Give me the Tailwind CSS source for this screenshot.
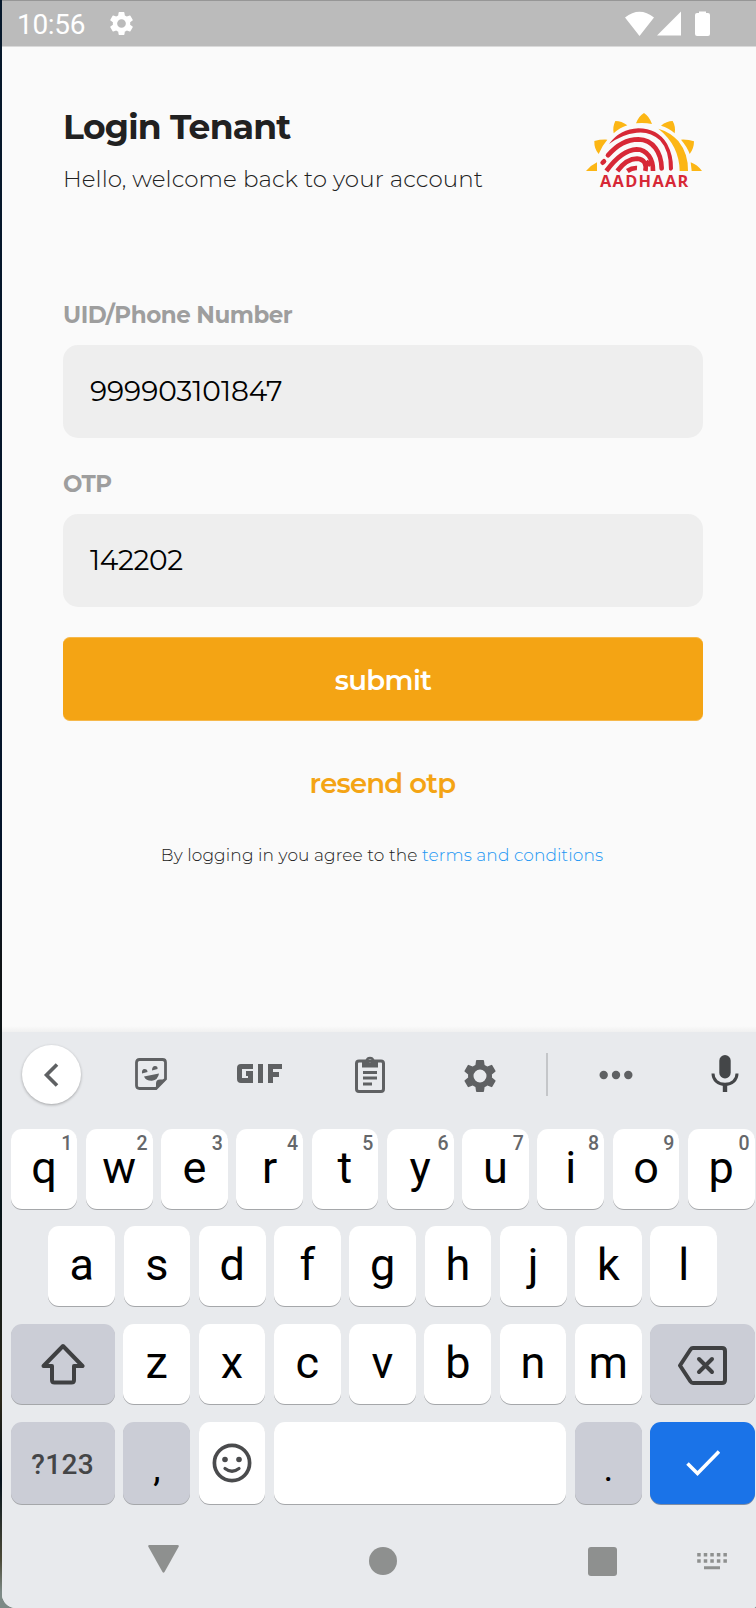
<!DOCTYPE html>
<html lang="en">
<head>
<meta charset="utf-8">
<title>Login Tenant</title>
<script src="https://cdn.jsdelivr.net/npm/@tailwindcss/browser@4"></script>
</head>
<body class="w-[756px] h-[1608px] overflow-hidden bg-[linear-gradient(#06182b_0%,#04142a_54%,#101416_60%,#061418_75%,#2a2618_87%,#05121c_92%,#4b4a38_97%,#7d8a86_99%)] pl-[2px] font-[Montserrat,Inter,sans-serif]">
<div class="w-[754px] h-[1608px] flex flex-col bg-[#fafafa] rounded-bl-[14px] rounded-br-[3px] overflow-hidden">

  <!-- Status bar -->
  <header class="h-[47px] shrink-0 bg-[#bbbbbb] border-t border-t-[#969696] border-b border-b-[#dadada] flex items-center pl-[15px] text-white">
    <span class="font-[Roboto,sans-serif] text-[28px] leading-[44px] pt-[2px] w-[71px] tracking-[-0.3px]">10:56</span>
    <svg class="ml-[19px] w-[29px] h-[29px]" viewBox="0 0 24 24" fill="currentColor"><path d="M19.14 12.94c.04-.3.06-.61.06-.94s-.02-.64-.07-.94l2.03-1.58a.49.49 0 0 0 .12-.61l-1.92-3.32a.49.49 0 0 0-.59-.22l-2.39.96a7 7 0 0 0-1.62-.94l-.36-2.54a.48.48 0 0 0-.48-.41h-3.84a.47.47 0 0 0-.47.41l-.36 2.54c-.59.24-1.13.57-1.62.94l-2.39-.96a.48.48 0 0 0-.59.22L2.74 8.87a.47.47 0 0 0 .12.61l2.03 1.58a6.6 6.6 0 0 0 0 1.88l-2.03 1.58a.49.49 0 0 0-.12.61l1.92 3.32c.12.22.37.29.59.22l2.39-.96c.5.38 1.03.7 1.62.94l.36 2.54c.05.24.24.41.48.41h3.84c.24 0 .44-.17.47-.41l.36-2.54a6.7 6.7 0 0 0 1.62-.94l2.39.96c.22.08.47 0 .59-.22l1.92-3.32a.47.47 0 0 0-.12-.61zM12 15.6a3.6 3.6 0 1 1 0-7.2 3.6 3.6 0 0 1 0 7.2"/></svg>
    <svg class="ml-auto mr-[45px] w-[86px] h-[26px]" viewBox="0 0 86 26" fill="currentColor"><path d="M0 6.5Q14.5 -5 29 6.5L14.5 25ZM32 24.5 56 .5V24.5ZM74 2V.5h7V2h2q2 0 2 2V23q0 2-2 2H72q-2 0-2-2V4q0-2 2-2Z"/></svg>
  </header>

  <!-- Login form -->
  <main class="grow pl-[61px] pr-[53px] pt-[60px] flex flex-col">
    <div class="flex justify-between h-[88px]">
      <div>
        <h1 class="h-[40px] leading-[40px] text-[34.5px] font-bold text-[#212121] whitespace-nowrap tracking-[-0.75px]">Login Tenant</h1>
        <p class="mt-4 h-[32px] leading-[32px] text-[23px] font-light text-[#212121] whitespace-nowrap tracking-[0.06px]">Hello, welcome back to your account</p>
      </div>
      <svg class="mt-[5px] w-[118px] h-[77px] overflow-visible" viewBox="45 335 354 231">
        <g fill="#fcb614">
          <path d="M198 369Q207 346 222 338Q238 348 246 371Q222 366 198 369Z"/>
          <path d="M136 362Q155 362 172 375Q148 383 131 399Q127 380 136 362Z"/>
          <path d="M308 362Q318 380 314 399Q296 382 273 376Q290 362 308 362Z"/>
          <path d="M73 422Q92 417 112 418Q96 436 86 461Q72 445 73 422Z"/>
          <path d="M372 423Q372 445 359 461Q352 440 333 418Q355 417 372 423Z"/>
          <path d="M48 512Q62 495 81 486V512ZM396 512Q382 493 362 486L365 512Z"/>
          <path d="M265 385Q300 395 325 422Q355 460 354 512H329Q328 435 265 385Z"/>
        </g>
        <path fill="#d72836" d="M117 431Q150 386 205 384Q262 384 291 430Q310 465 309 505Q304 515 297 508Q298 450 270 420Q240 392 200 397Q155 402 117 431Z"/>
        <g fill="none" stroke="#d72836" stroke-width="14">
          <path stroke-linecap="round" d="M114 465Q155 417 205 417C250 418 274 457 275 504M98 487L102 483"/>
          <path d="M109 512Q155 449 200 447C232 447 250 478 249 512M142 512Q170 475 201 475C224 477 230 492 226 512M228 484 242 494M172 512Q186 502 201 503"/>
        </g>
        <text x="90" y="561" font-family="Open Sans, sans-serif" font-weight="700" font-size="49" fill="#d72836" textLength="265" lengthAdjust="spacing">AADHAAR</text>
      </svg>
    </div>

    <label class="mt-[103px] h-[32px] leading-[34px] text-[23px] font-bold text-[#9e9e9e] whitespace-nowrap tracking-[-0.48px]">UID/Phone Number</label>
    <div class="mt-[15px] h-[93px] rounded-[15px] bg-[#eeeeee] pl-[27px] pb-[2px] flex items-center text-[28px] text-black">999903101847</div>
    <label class="mt-[29px] h-[32px] leading-[34px] text-[23px] font-bold text-[#9e9e9e] whitespace-nowrap tracking-[-0.6px]">OTP</label>
    <div class="mt-[15px] h-[93px] rounded-[15px] bg-[#eeeeee] pl-[27px] pb-[2px] flex items-center text-[28px] text-black tracking-[-0.3px]">142202</div>

    <button class="mt-[30px] h-[84px] rounded-[7px] bg-[#f4a414] border-y border-[#f6b84b] pt-[3px] text-[27.5px] font-semibold text-white tracking-[-0.6px]">submit</button>
    <button class="mt-[46px] h-[32px] leading-[32px] pr-px text-[27.5px] font-semibold text-[#f4a414] tracking-[-0.75px]">resend otp</button>
    <p class="mt-[44px] h-[24px] leading-[24px] pr-[2px] text-[17px] text-center font-light text-[#212121] whitespace-nowrap tracking-[0.1px]">By logging in you agree to the <a class="text-[#2196f3]">terms and conditions</a></p>
  </main>

  <div class="h-[6px] shrink-0 bg-gradient-to-b from-[#fafafa] to-[#f0f0f0]"></div>

  <!-- On-screen keyboard -->
  <section class="h-[576px] shrink-0 bg-[#e8eaed] font-[Roboto,sans-serif] text-black flex flex-col">
    <div class="h-[97px] shrink-0 pb-[12px] pl-[20px] flex items-center text-[#5f6163]">
      <div class="size-[59px] rounded-full bg-white shadow-[0_1px_3px_rgba(0,0,0,0.3)] flex items-center justify-center pr-[2px]">
        <svg class="w-[16px] h-[24px]" viewBox="0 0 16 24" fill="none" stroke="currentColor" stroke-width="3.6"><path d="M14 1.5 3.5 12 14 22.5"/></svg>
      </div>
      <svg class="ml-[54px] -mt-[2px] w-[32px] h-[32px]" viewBox="0 0 32 32" fill="none" stroke="currentColor" stroke-width="2.8"><path d="M4.5 1.5H27.5Q30.5 1.5 30.5 4.5V21L21 30.5H4.5Q1.5 30.5 1.5 27.5V4.5Q1.5 1.5 4.5 1.5Z"/><path stroke="none" fill="currentColor" d="M21 31V25.5Q21 21.5 25 21.5H31L21 31ZM7 15.5Q6.500 11 9.500 11T12.500 14ZM17 12.500Q17 8 20 8T22.500 11ZM9 18.500 24 15.500Q23 22 17 22.800 11 23 9 18.500Z"/></svg>
      <svg class="ml-[70px] -mt-[2px] w-[45px] h-[19px]" viewBox="0 0 45 19" fill="none" stroke="currentColor" stroke-width="5"><path d="M16 2.5H4Q2.5 2.5 2.5 4V15Q2.5 16.5 4 16.5H13.5V9.5H9M23.5 0V19M33.5 19V2.5H45M33.5 10.5H42"/></svg>
      <svg class="ml-[73px] w-[30px] h-[37px]" viewBox="0 0 30 37"><path fill="none" stroke="currentColor" stroke-width="3" d="M4 5H26Q28.5 5 28.5 7.5V33Q28.5 35.5 26 35.5H4Q1.5 35.5 1.5 33V7.5Q1.5 5 4 5Z"/><path fill="currentColor" fill-rule="evenodd" d="M7 4H10.5A4.7 4.7 0 0 1 19.5 4H23V11.5H7ZM15 3A1.8 1.8 0 1 0 15 6.6 1.8 1.8 0 0 0 15 3Z"/><path stroke="currentColor" stroke-width="3" d="M8 16.5H22M8 22H22M8 28H17"/></svg>
      <svg class="ml-[75px] mt-[2px] w-[40px] h-[40px]" viewBox="0 0 24 24" fill="currentColor"><path d="M19.14 12.94c.04-.3.06-.61.06-.94s-.02-.64-.07-.94l2.03-1.58a.49.49 0 0 0 .12-.61l-1.92-3.32a.49.49 0 0 0-.59-.22l-2.39.96a7 7 0 0 0-1.62-.94l-.36-2.54a.48.48 0 0 0-.48-.41h-3.84a.47.47 0 0 0-.47.41l-.36 2.54c-.59.24-1.13.57-1.62.94l-2.39-.96a.48.48 0 0 0-.59.22L2.74 8.87a.47.47 0 0 0 .12.61l2.03 1.58a6.6 6.6 0 0 0 0 1.88l-2.03 1.58a.49.49 0 0 0-.12.61l1.92 3.32c.12.22.37.29.59.22l2.39-.96c.5.38 1.03.7 1.62.94l.36 2.54c.05.24.24.41.48.41h3.84c.24 0 .44-.17.47-.41l.36-2.54a6.7 6.7 0 0 0 1.62-.94l2.39.96c.22.08.47 0 .59-.22l1.92-3.32a.47.47 0 0 0-.12-.61zM12 15.9a3.9 3.9 0 1 1 0-7.8 3.9 3.9 0 0 1 0 7.8"/></svg>
      <div class="ml-[46px] w-[2px] h-[43px] bg-[#c4c6c9]"></div>
      <svg class="ml-[50.5px] w-[34px] h-[10px]" viewBox="0 0 34 10" fill="currentColor"><circle cx="4.7" cy="5" r="4.2"/><circle cx="17" cy="5" r="4.2"/><circle cx="29.3" cy="5" r="4.2"/></svg>
      <svg class="ml-[78.5px] -mt-[2px] w-[28px] h-[37px] text-[#444648]" viewBox="0 0 28 37"><rect x="8.3" y="0" width="11.4" height="23.5" rx="5.7" fill="currentColor"/><path fill="none" stroke="currentColor" stroke-width="3" d="M2 18.5C2 25 7 29.3 14 29.3S26 25 26 18.5"/><path stroke="currentColor" stroke-width="4.4" d="M14 29V37"/></svg>
    </div>

    <div id="row1" class="h-[97.3px] shrink-0 pl-[8.6px] flex gap-[8.5px]"></div>
    <div id="row2" class="h-[98px] shrink-0 pl-[46.3px] flex gap-[8.5px]"></div>
    <div id="row3" class="h-[98px] shrink-0 pl-[8.5px] flex gap-[8.5px]">
      <div class="w-[104.4px] h-[79.6px] rounded-[11px] bg-[#cbcdd6] shadow-[0_1px_0.5px_#a5a7aa] flex items-center justify-center text-[#3f4042]">
        <svg class="w-[44px] h-[42px]" viewBox="0 0 44 42" fill="none" stroke="currentColor" stroke-width="4" stroke-linejoin="round"><path d="M22 3 41.5 23H33V37Q33 39.5 30.5 39.5H13.5Q11 39.5 11 37V23H2.5Z"/></svg>
      </div>
    </div>
    <div class="h-[97px] shrink-0 pl-[8.5px] flex gap-[8.5px]">
      <div class="w-[104.4px] h-[81.4px] rounded-[11px] bg-[#cbcdd6] shadow-[0_1px_0.5px_#a5a7aa] flex items-center justify-center pt-[4px] text-[28px] font-medium text-[#444547] tracking-[0.4px]">?123</div>
      <div class="w-[66.75px] h-[81.4px] rounded-[11px] bg-[#cbcdd6] shadow-[0_1px_0.5px_#a5a7aa] flex items-center justify-center pt-[12px] text-[37px]">,</div>
      <div class="w-[66.75px] h-[81.4px] rounded-[11px] bg-white shadow-[0_1px_0.5px_#a5a7aa] flex items-center justify-center pr-px text-[#4a4b4d]">
        <svg class="w-[40px] h-[40px]" viewBox="0 0 40 40" fill="none" stroke="currentColor" stroke-width="3.7"><circle cx="20" cy="20" r="17.6"/><path stroke-width="3.2" stroke-linecap="round" d="M13 25.5Q20 31 27 25.5"/><g stroke="none" fill="currentColor"><circle cx="13" cy="16.5" r="2.8"/><circle cx="27" cy="16.5" r="2.8"/></g></svg>
      </div>
      <div class="w-[292.5px] h-[81.4px] rounded-[11px] bg-white shadow-[0_1px_0.5px_#a5a7aa]"></div>
      <div class="w-[66.75px] h-[81.4px] rounded-[11px] bg-[#cbcdd6] shadow-[0_1px_0.5px_#a5a7aa] flex items-center justify-center pt-[12px] text-[37px]">.</div>
      <div class="w-[105px] h-[81.4px] rounded-[11px] bg-[#1a73e8] shadow-[0_1px_0.5px_#7f8ea5] flex items-center justify-center text-white">
        <svg class="w-[34px] h-[28px]" viewBox="0 0 34 28" fill="none" stroke="currentColor" stroke-width="3.6"><path d="M1.5 14.5 11.5 24.5 33 2.5"/></svg>
      </div>
    </div>

    <!-- Navigation bar -->
    <div class="grow pb-[5px] pl-[146px] flex items-center text-[#8e908f]">
      <svg class="w-[31px] h-[28px] -mt-[5px]" viewBox="0 0 31 28" fill="currentColor"><path d="M1.5 0H29.5Q31.5 0 30.5 2L16.5 27Q15.5 28.5 14.5 27L.5 2Q-.5 0 1.5 0Z"/></svg>
      <div class="ml-[190px] size-[28px] rounded-full bg-[#8e908f]"></div>
      <div class="ml-[191px] size-[29px] rounded-[3px] bg-[#8e908f]"></div>
      <svg class="ml-[80px] w-[30px] h-[17px]" viewBox="0 0 30 17" stroke="currentColor" fill="none"><path stroke-width="3.4" stroke-dasharray="3.5 3.05" d="M.2 1.7H30M.2 8H30"/><path stroke-width="3" d="M7 14.7H23"/></svg>
    </div>
  </section>
</div>

<template id="key"><div class="relative w-[66.75px] h-[79.6px] shrink-0 rounded-[11px] bg-white shadow-[0_1px_0.5px_#a5a7aa] flex items-center justify-center pb-[3px] text-[45px]"><span></span><sup class="absolute top-[4px] right-[5px] text-[19.5px] leading-[22px] font-medium text-[#65676a]"></sup></div></template>
<script>
  // Letter keys; the top row also carries its long-press digits.
  const template = document.getElementById('key');
  [['row1', 'qwertyuiop'], ['row2', 'asdfghjkl'], ['row3', 'zxcvbnm']].forEach(([id, letters]) => {
    [...letters].forEach((letter, i) => {
      const key = template.content.cloneNode(true);
      key.querySelector('span').textContent = letter;
      const sup = key.querySelector('sup');
      if (id === 'row1') sup.textContent = (i + 1) % 10; else sup.remove();
      document.getElementById(id).append(key);
    });
  });
  const backspace = document.createElement('div');
  backspace.className = 'w-[105px] h-[79.6px] rounded-[11px] bg-[#cbcdd6] shadow-[0_1px_0.5px_#a5a7aa] flex items-center justify-center text-[#3f4042]';
  backspace.innerHTML = '<svg class="w-[49px] h-[39px] mt-[3px]" viewBox="0 0 49 39" fill="none" stroke="currentColor" stroke-width="4" stroke-linejoin="round"><path d="M15 2H44Q47 2 47 5V34Q47 37 44 37H15Q13.5 37 12.5 35.5L2 19.5 12.5 3.5Q13.5 2 15 2Z"/><path stroke-linecap="round" d="M21 13 34 26M34 13 21 26"/></svg>';
  document.getElementById('row3').append(backspace);
</script>
</body>
</html>
